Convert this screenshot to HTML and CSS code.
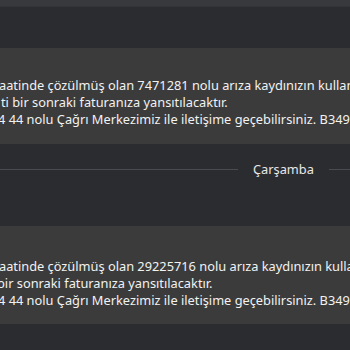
FILE: index.html
```html
<!DOCTYPE html>
<html lang="tr">
<head>
<meta charset="utf-8">
<link rel="stylesheet" href="styles.css">
</head>
<body>
<div class="app">
  <div class="topbar"></div>
  <div class="gap-top"></div>
  <div class="bubble first">
    <p class="line l1">aatinde çözülmüş olan 7471281 nolu arıza kaydınızın kullanım</p>
    <p class="line l2">ti bir sonraki faturanıza yansıtılacaktır.</p>
    <p class="line l3">4 44 nolu Çağrı Merkezimiz ile iletişime geçebilirsiniz. B349</p>
  </div>
  <div class="divider">
    <span class="rule left"></span>
    <span class="day">Çarşamba</span>
    <span class="rule right"></span>
  </div>
  <div class="bubble second">
    <p class="line l1">aatinde çözülmüş olan 29225716 nolu arıza kaydınızın kullanım</p>
    <p class="line l2b">bir sonraki faturanıza yansıtılacaktır.</p>
    <p class="line l3">4 44 nolu Çağrı Merkezimiz ile iletişime geçebilirsiniz. B349</p>
  </div>
</div>
</body>
</html>
```
FILE: styles.css
```css
html, body {
  margin: 0;
  padding: 0;
  background: #2b2c30;
}
.app {
  width: 350px;
  height: 350px;
  overflow: hidden;
  background: #2b2c30;
  font-family: "Noto Sans", "Open Sans", sans-serif;
  font-size: 12.8px;
  color: #f2f2f2;
}
.topbar {
  height: 6px;
  background: #38393c;
  border-bottom: 1px solid #333438;
}
.gap-top {
  height: 41px;
}
.bubble {
  background: #3b3b3b;
  overflow: hidden;
  white-space: nowrap;
}
.bubble.first {
  height: 96px;
  padding-top: 29px;
  box-sizing: border-box;
}
.bubble.second {
  height: 98px;
  padding-top: 32px;
  box-sizing: border-box;
}
.line {
  margin: 0;
  line-height: 17px;
}
.l1 { margin-left: -1px; }
.l2 { margin-left: 1px; }
.l2b { margin-left: -3px; }
.l3 { margin-left: -2px; }
.divider {
  height: 82px;
  display: flex;
  align-items: flex-start;
  padding-top: 17px;
  box-sizing: border-box;
}
.rule {
  height: 1px;
  background: #4a4b50;
  margin-top: 8px;
}
.rule.left {
  width: 238px;
}
.day {
  margin: 0 15px;
  line-height: 17px;
  color: #e8e8e8;
}
.rule.right {
  flex: 1;
}
```
